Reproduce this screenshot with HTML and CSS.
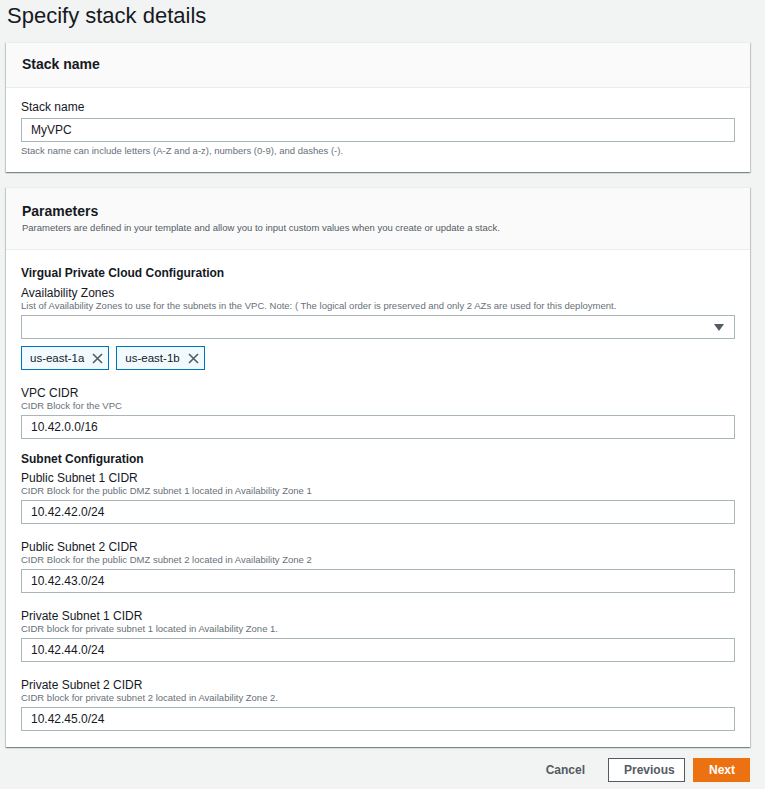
FILE: index.html
```html
<!DOCTYPE html>
<html>
<head>
<meta charset="utf-8">
<link rel="stylesheet" href="styles.css">
</head>
<body>
<div class="page">
  <h1 class="title">Specify stack details</h1>

  <section class="card card-stack">
    <header class="card-head head-stack">
      <h2>Stack name</h2>
    </header>
    <div class="card-body stack-body">
      <div class="field">
        <label class="label">Stack name</label>
        <div class="input">MyVPC</div>
        <div class="hint hint-below">Stack name can include letters (A-Z and a-z), numbers (0-9), and dashes (-).</div>
      </div>
    </div>
  </section>

  <section class="card card-params">
    <header class="card-head head-params">
      <h2>Parameters</h2>
      <p class="head-desc">Parameters are defined in your template and allow you to input custom values when you create or update a stack.</p>
    </header>
    <div class="card-body params-body">
      <h3 class="group">Virgual Private Cloud Configuration</h3>
      <div class="field">
        <label class="label">Availability Zones</label>
        <div class="hint">List of Availability Zones to use for the subnets in the VPC. Note: ( The logical order is preserved and only 2 AZs are used for this deployment.</div>
        <div class="input select">
          <svg class="caret" width="10" height="7" viewBox="0 0 10 7"><path d="M0 0 H10 L5 7 Z" fill="#545b64"/></svg>
        </div>
        <div class="tokens">
          <span class="token">us-east-1a<svg class="x" width="11" height="11" viewBox="0 0 11 11"><path d="M1 1 L10 10 M10 1 L1 10" stroke="#545b64" stroke-width="1.6"/></svg></span>
          <span class="token">us-east-1b<svg class="x" width="11" height="11" viewBox="0 0 11 11"><path d="M1 1 L10 10 M10 1 L1 10" stroke="#545b64" stroke-width="1.6"/></svg></span>
        </div>
      </div>
      <div class="field">
        <label class="label">VPC CIDR</label>
        <div class="hint">CIDR Block for the VPC</div>
        <div class="input">10.42.0.0/16</div>
      </div>
      <h3 class="group group-sub">Subnet Configuration</h3>
      <div class="field">
        <label class="label">Public Subnet 1 CIDR</label>
        <div class="hint">CIDR Block for the public DMZ subnet 1 located in Availability Zone 1</div>
        <div class="input">10.42.42.0/24</div>
      </div>
      <div class="field">
        <label class="label">Public Subnet 2 CIDR</label>
        <div class="hint">CIDR Block for the public DMZ subnet 2 located in Availability Zone 2</div>
        <div class="input">10.42.43.0/24</div>
      </div>
      <div class="field">
        <label class="label">Private Subnet 1 CIDR</label>
        <div class="hint">CIDR block for private subnet 1 located in Availability Zone 1.</div>
        <div class="input">10.42.44.0/24</div>
      </div>
      <div class="field">
        <label class="label">Private Subnet 2 CIDR</label>
        <div class="hint">CIDR block for private subnet 2 located in Availability Zone 2.</div>
        <div class="input">10.42.45.0/24</div>
      </div>
    </div>
  </section>

  <div class="actions">
    <button class="btn btn-link">Cancel</button>
    <button class="btn btn-normal">Previous</button>
    <button class="btn btn-primary">Next</button>
  </div>
</div>
</body>
</html>
```

FILE: styles.css
```css
html, body {
  margin: 0;
  padding: 0;
  background: #f2f3f3;
}
body {
  font-family: "Liberation Sans", Arial, sans-serif;
  color: #16191f;
}
.page {
  padding: 0 15px 0 6px;
}
.title {
  margin: 0;
  padding: 2px 0 0 1px;
  height: 40px;
  font-size: 22px;
  font-weight: normal;
  line-height: 28px;
  color: #16191f;
}
.card {
  background: #fff;
  border-top: 1px solid #eaeded;
  box-shadow: 0 1px 1px 0 rgba(0, 28, 36, 0.3), 1px 1px 1px 0 rgba(0, 28, 36, 0.15), -1px 1px 1px 0 rgba(0, 28, 36, 0.15);
}
.card-stack {
  margin-bottom: 15px;
}
.card-head {
  background: #fafafa;
  border-bottom: 1px solid #eaeded;
  padding: 14px 15px 14px 16px;
}
.head-stack {
  padding-top: 12px;
}
.card-head h2 {
  margin: 0;
  font-size: 14px;
  font-weight: bold;
  line-height: 18px;
}
.head-desc {
  margin: 0;
  font-size: 9.5px;
  line-height: 15px;
  color: #545b64;
}
.card-body {
  padding: 10px 15px 15px 15px;
}
.field {
  display: flex;
  flex-direction: column;
}
.label {
  padding-top: 2px;
  font-size: 12px;
  line-height: 14px;
  color: #16191f;
}
.hint {
  font-size: 9.5px;
  line-height: 12px;
  color: #687078;
}
.hint-below {
  margin-top: 3px;
}
.input {
  box-sizing: border-box;
  height: 24px;
  margin-top: 3px;
  border: 1px solid #aab7b8;
  background: #fff;
  padding: 0 9px;
  font-size: 12px;
  line-height: 22px;
  color: #16191f;
}
.stack-body .input {
  margin-top: 4px;
}
.select {
  display: flex;
  justify-content: flex-end;
  align-items: center;
  padding-right: 10px;
}
.tokens {
  display: flex;
  gap: 7px;
  margin-top: 7px;
}
.token {
  box-sizing: border-box;
  height: 24px;
  display: inline-flex;
  align-items: center;
  gap: 8px;
  padding: 0 5px 0 8px;
  border: 1px solid #0073bb;
  background: #f1faff;
  font-size: 11.5px;
  color: #16191f;
}
.params-body {
  padding-top: 15px;
  padding-bottom: 16px;
}
.params-body .field + .field {
  margin-top: 14px;
}
.group {
  margin: 0 0 3px 0;
  font-size: 12px;
  font-weight: bold;
  line-height: 16px;
}
.group-sub {
  margin-top: 12px;
  margin-bottom: 2px;
}
.actions {
  display: flex;
  justify-content: flex-end;
  align-items: center;
  gap: 8px;
  margin-top: 11px;
}
.btn {
  box-sizing: border-box;
  height: 24px;
  font-family: "Liberation Sans", Arial, sans-serif;
  font-size: 12px;
  font-weight: bold;
  padding: 0 15px;
  cursor: pointer;
}
.btn-link {
  background: transparent;
  border: none;
  color: #545b64;
}
.btn-normal {
  background: #fff;
  border: 1px solid #545b64;
  color: #545b64;
  width: 77px;
}
.btn-primary {
  background: #ec7211;
  border: 1px solid #ec7211;
  color: #fff;
  width: 57px;
}
```
